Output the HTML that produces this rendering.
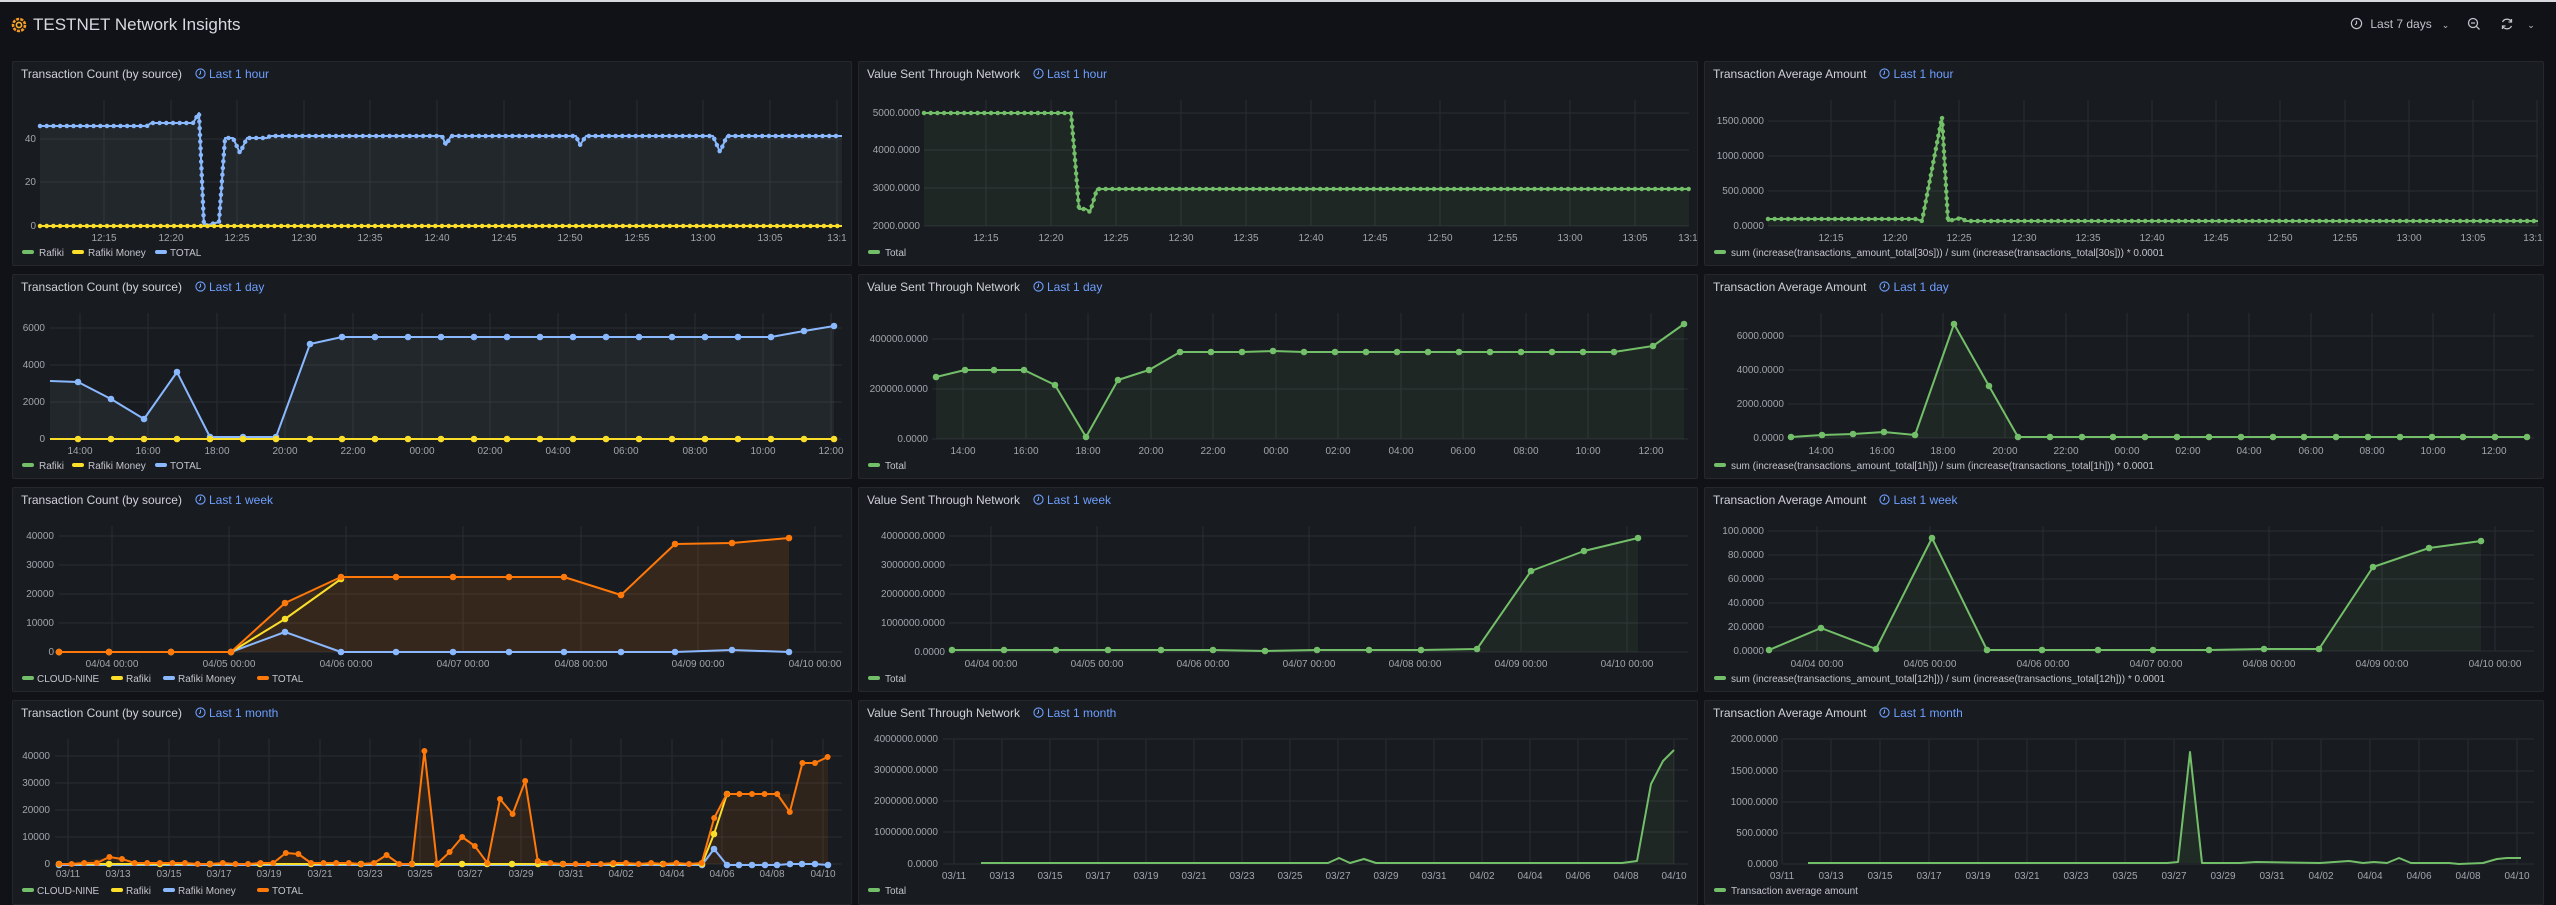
<!DOCTYPE html>
<html><head><meta charset="utf-8">
<style>
*{margin:0;padding:0;box-sizing:border-box}
body{width:2556px;height:905px;background:#111217;overflow:hidden;position:relative;font-family:"Liberation Sans",sans-serif;color:#ccccdc}
.topline{position:absolute;left:0;top:0;width:2556px;height:2px;background:#d8d9de}
.p{position:absolute;width:840px;height:205px;background:#181b1f;border:1px solid #25272d;border-radius:2px;overflow:hidden}
.p svg{position:absolute;left:-1px;top:-1px}
.t{position:absolute;left:8px;top:5px;font-size:12px;color:#d0d1da;white-space:nowrap}
.t span{color:#6e9fff;margin-left:13px}
.t span svg{position:relative;left:0;top:1px;margin-right:3px}
.gr{stroke:#2a2d33;stroke-width:1;fill:none}
.yl{fill:#a3a5ad;font:10px "Liberation Sans",sans-serif;text-anchor:end}
.xl{fill:#a3a5ad;font:10px "Liberation Sans",sans-serif;text-anchor:middle}
.lg{fill:#c4c5ce;font:10px "Liberation Sans",sans-serif}
.ln{fill:none;stroke-width:2;stroke-linejoin:round}
</style></head><body>
<div class="topline"></div>
<svg style="position:absolute;left:11px;top:17px" width="16" height="16" viewBox="0 0 16 16"><circle cx="8" cy="8" r="6" fill="none" stroke="#f59a1e" stroke-width="2.6" stroke-dasharray="3 1.2"/><circle cx="8" cy="8" r="2.6" fill="none" stroke="#f9b233" stroke-width="1.6"/></svg>
<div style="position:absolute;left:33px;top:15px;font-size:17px;color:#d8d9e0">TESTNET Network Insights</div>
<div style="position:absolute;left:2350px;top:17px;font-size:12px;color:#c0c1ca;white-space:nowrap">
<svg width="13" height="13" viewBox="0 0 14 14" style="vertical-align:-2px"><circle cx="7" cy="7" r="5.5" fill="none" stroke="#c0c1ca" stroke-width="1.3"/><path d="M7 4V7L5.5 8.5" stroke="#c0c1ca" stroke-width="1.3" fill="none"/></svg>
<span style="margin-left:4px">Last 7 days</span><span style="margin-left:10px;font-size:9px">&#8964;</span>
<svg width="14" height="14" viewBox="0 0 14 14" style="margin-left:14px;vertical-align:-3px"><circle cx="6" cy="6" r="4.5" fill="none" stroke="#c0c1ca" stroke-width="1.3"/><path d="M4 6H8M9.3 9.3L12.5 12.5" stroke="#c0c1ca" stroke-width="1.3"/></svg>
<svg width="14" height="14" viewBox="0 0 14 14" style="margin-left:16px;vertical-align:-3px"><path d="M11.5 5A5 5 0 0 0 2.5 5M2.5 9A5 5 0 0 0 11.5 9M11.5 2V5H8.5M2.5 12V9H5.5" stroke="#c0c1ca" stroke-width="1.3" fill="none"/></svg>
<span style="margin-left:10px;font-size:9px">&#8964;</span>
</div>

<svg width="0" height="0" style="position:absolute">
<defs>
<marker id="mb" markerWidth="8" markerHeight="8" refX="4" refY="4" markerUnits="userSpaceOnUse"><circle cx="4" cy="4" r="3.3" fill="#8ab8ff"/></marker>
<marker id="my" markerWidth="8" markerHeight="8" refX="4" refY="4" markerUnits="userSpaceOnUse"><circle cx="4" cy="4" r="3.3" fill="#fade2a"/></marker>
<marker id="mg" markerWidth="8" markerHeight="8" refX="4" refY="4" markerUnits="userSpaceOnUse"><circle cx="4" cy="4" r="3.3" fill="#73bf69"/></marker>
<marker id="mo" markerWidth="8" markerHeight="8" refX="4" refY="4" markerUnits="userSpaceOnUse"><circle cx="4" cy="4" r="3.3" fill="#ff780a"/></marker>
<marker id="mo2" markerWidth="8" markerHeight="8" refX="4" refY="4" markerUnits="userSpaceOnUse"><circle cx="4" cy="4" r="3" fill="#ff780a"/></marker>
</defs></svg>

<!-- ROW 1 -->
<div class="p" style="left:12px;top:61px">
<svg width="840" height="205">
<path class="gr" d="M28 78H830M28 121H830M28 165H830M92 39V165M159 39V165M225 39V165M292 39V165M358 39V165M425 39V165M492 39V165M558 39V165M625 39V165M691 39V165M758 39V165M825 39V165"/>
<text class="yl" x="24" y="81">40</text><text class="yl" x="24" y="124">20</text><text class="yl" x="24" y="168">0</text>
<g class="xl"><text x="92" y="180">12:15</text><text x="159" y="180">12:20</text><text x="225" y="180">12:25</text><text x="292" y="180">12:30</text><text x="358" y="180">12:35</text><text x="425" y="180">12:40</text><text x="492" y="180">12:45</text><text x="558" y="180">12:50</text><text x="625" y="180">12:55</text><text x="691" y="180">13:00</text><text x="758" y="180">13:05</text><text x="825" y="180">13:1</text></g>
<polygon fill="rgba(130,170,170,0.09)" points="28,65 135,65 139,62 181,62 187,52 192,165 207,161 213,77 221,77 228,92 235,77 255,77 258,75 430,75 434,84 439,75 564,75 568,84 574,75 701,75 708,91 715,75 830,75 830,165 28,165"/>
<polyline class="ln" stroke="#8ab8ff" points="28,65 135,65 139,62 181,62 187,52 192,165 207,161 213,77 221,77 228,92 235,77 255,77 258,75 430,75 434,84 439,75 564,75 568,84 574,75 701,75 708,91 715,75 830,75"/>
<polyline fill="none" stroke="#8ab8ff" stroke-width="4.5" stroke-linecap="round" stroke-dasharray="0 6.7" points="28,65 135,65 139,62 181,62 187,52 192,165 207,161 213,77 221,77 228,92 235,77 255,77 258,75 430,75 434,84 439,75 564,75 568,84 574,75 701,75 708,91 715,75 830,75"/>
<path d="M28 165H830" stroke="#fade2a" stroke-width="2"/>
<path d="M28 165H830" stroke="#fade2a" stroke-width="4.5" stroke-linecap="round" stroke-dasharray="0 6.7"/>
<rect x="10" y="189" width="12" height="4" rx="2" fill="#73bf69"/><text class="lg" x="27" y="195">Rafiki</text>
<rect x="60" y="189" width="12" height="4" rx="2" fill="#fade2a"/><text class="lg" x="76" y="195">Rafiki Money</text>
<rect x="143" y="189" width="12" height="4" rx="2" fill="#8ab8ff"/><text class="lg" x="158" y="195">TOTAL</text>
</svg>
<div class="t">Transaction Count (by source)<span><svg width="11" height="11" viewBox="0 0 12 12"><circle cx="6" cy="6" r="5" fill="none" stroke="#6e9fff" stroke-width="1.2"/><path d="M6 3V6L4.5 7.5" stroke="#6e9fff" stroke-width="1.2" fill="none"/></svg>Last 1 hour</span></div>
</div>

<div class="p" style="left:858px;top:61px">
<svg width="840" height="205">
<path class="gr" d="M66 52H831M66 89H831M66 127H831M66 165H831M128 39V165M193 39V165M258 39V165M323 39V165M388 39V165M453 39V165M517 39V165M582 39V165M647 39V165M712 39V165M777 39V165"/>
<text class="yl" x="62" y="55">5000.0000</text><text class="yl" x="62" y="92">4000.0000</text><text class="yl" x="62" y="130">3000.0000</text><text class="yl" x="62" y="168">2000.0000</text>
<g class="xl"><text x="128" y="180">12:15</text><text x="193" y="180">12:20</text><text x="258" y="180">12:25</text><text x="323" y="180">12:30</text><text x="388" y="180">12:35</text><text x="453" y="180">12:40</text><text x="517" y="180">12:45</text><text x="582" y="180">12:50</text><text x="647" y="180">12:55</text><text x="712" y="180">13:00</text><text x="777" y="180">13:05</text><text x="830" y="180">13:1</text></g>
<polygon fill="rgba(115,191,105,0.08)" points="66,52 213,52 216,86 221,148 228,148 232,151 239,128 245,128 831,128 831,165 66,165"/>
<polyline class="ln" stroke="#73bf69" points="66,52 213,52 216,86 221,148 228,148 232,151 239,128 245,128 831,128"/>
<polyline fill="none" stroke="#73bf69" stroke-width="4.5" stroke-linecap="round" stroke-dasharray="0 6.7" points="66,52 213,52 216,86 221,148 228,148 232,151 239,128 245,128 831,128"/>
<rect x="10" y="189" width="12" height="4" rx="2" fill="#73bf69"/><text class="lg" x="27" y="195">Total</text>
</svg>
<div class="t">Value Sent Through Network<span><svg width="11" height="11" viewBox="0 0 12 12"><circle cx="6" cy="6" r="5" fill="none" stroke="#6e9fff" stroke-width="1.2"/><path d="M6 3V6L4.5 7.5" stroke="#6e9fff" stroke-width="1.2" fill="none"/></svg>Last 1 hour</span></div>
</div>

<div class="p" style="left:1704px;top:61px">
<svg width="840" height="205">
<path class="gr" d="M64 60H834M64 95H834M64 130H834M64 165H834M127 39V165M191 39V165M255 39V165M320 39V165M384 39V165M448 39V165M512 39V165M576 39V165M641 39V165M705 39V165M769 39V165M833 39V165"/>
<text class="yl" x="60" y="63">1500.0000</text><text class="yl" x="60" y="98">1000.0000</text><text class="yl" x="60" y="133">500.0000</text><text class="yl" x="60" y="168">0.0000</text>
<g class="xl"><text x="127" y="180">12:15</text><text x="191" y="180">12:20</text><text x="255" y="180">12:25</text><text x="320" y="180">12:30</text><text x="384" y="180">12:35</text><text x="448" y="180">12:40</text><text x="512" y="180">12:45</text><text x="576" y="180">12:50</text><text x="641" y="180">12:55</text><text x="705" y="180">13:00</text><text x="769" y="180">13:05</text><text x="829" y="180">13:1</text></g>
<polygon fill="rgba(115,191,105,0.08)" points="64,158 212,158 218,160 238,56 244,160 257,157 262,160 834,160 834,165 64,165"/>
<polyline class="ln" stroke="#73bf69" points="64,158 212,158 218,160 238,56 244,160 257,157 262,160 834,160"/>
<polyline fill="none" stroke="#73bf69" stroke-width="4.5" stroke-linecap="round" stroke-dasharray="0 6.7" points="64,158 212,158 218,160 238,56 244,160 257,157 262,160 834,160"/>
<rect x="10" y="189" width="12" height="4" rx="2" fill="#73bf69"/><text class="lg" x="27" y="195">sum (increase(transactions_amount_total[30s])) / sum (increase(transactions_total[30s])) * 0.0001</text>
</svg>
<div class="t">Transaction Average Amount<span><svg width="11" height="11" viewBox="0 0 12 12"><circle cx="6" cy="6" r="5" fill="none" stroke="#6e9fff" stroke-width="1.2"/><path d="M6 3V6L4.5 7.5" stroke="#6e9fff" stroke-width="1.2" fill="none"/></svg>Last 1 hour</span></div>
</div>

<!-- ROW 2 -->
<div class="p" style="left:12px;top:274px">
<svg width="840" height="205">
<path class="gr" d="M38 54H830M38 91H830M38 128H830M38 165H830M68 39V165M136 39V165M205 39V165M273 39V165M341 39V165M410 39V165M478 39V165M546 39V165M614 39V165M683 39V165M751 39V165M819 39V165"/>
<text class="yl" x="33" y="57">6000</text><text class="yl" x="33" y="94">4000</text><text class="yl" x="33" y="131">2000</text><text class="yl" x="33" y="168">0</text>
<g class="xl"><text x="68" y="180">14:00</text><text x="136" y="180">16:00</text><text x="205" y="180">18:00</text><text x="273" y="180">20:00</text><text x="341" y="180">22:00</text><text x="410" y="180">00:00</text><text x="478" y="180">02:00</text><text x="546" y="180">04:00</text><text x="614" y="180">06:00</text><text x="683" y="180">08:00</text><text x="751" y="180">10:00</text><text x="819" y="180">12:00</text></g>
<polygon fill="rgba(130,170,170,0.09)" points="38,107 66,108 99,125 132,145 165,98 198,163 231,163 264,163 298,70 330,63 759,63 792,57 822,52 822,165 38,165"/>
<polyline class="ln" stroke="#8ab8ff" marker-mid="url(#mb)" marker-end="url(#mb)" points="38,107 66,108 99,125 132,145 165,98 198,163 231,163 264,163 298,70 330,63 363,63 396,63 429,63 462,63 495,63 528,63 561,63 594,63 627,63 660,63 693,63 726,63 759,63 792,57 822,52"/>
<polyline class="ln" stroke="#fade2a" marker-mid="url(#my)" marker-end="url(#my)" points="38,165 66,165 99,165 132,165 165,165 198,165 231,165 264,165 298,165 330,165 363,165 396,165 429,165 462,165 495,165 528,165 561,165 594,165 627,165 660,165 693,165 726,165 759,165 792,165 822,165"/>
<rect x="10" y="189" width="12" height="4" rx="2" fill="#73bf69"/><text class="lg" x="27" y="195">Rafiki</text>
<rect x="60" y="189" width="12" height="4" rx="2" fill="#fade2a"/><text class="lg" x="76" y="195">Rafiki Money</text>
<rect x="143" y="189" width="12" height="4" rx="2" fill="#8ab8ff"/><text class="lg" x="158" y="195">TOTAL</text>
</svg>
<div class="t">Transaction Count (by source)<span><svg width="11" height="11" viewBox="0 0 12 12"><circle cx="6" cy="6" r="5" fill="none" stroke="#6e9fff" stroke-width="1.2"/><path d="M6 3V6L4.5 7.5" stroke="#6e9fff" stroke-width="1.2" fill="none"/></svg>Last 1 day</span></div>
</div>

<div class="p" style="left:858px;top:274px">
<svg width="840" height="205">
<path class="gr" d="M74 65H830M74 115H830M74 165H830M105 39V165M168 39V165M230 39V165M293 39V165M355 39V165M418 39V165M480 39V165M543 39V165M605 39V165M668 39V165M730 39V165M793 39V165"/>
<text class="yl" x="70" y="68">400000.0000</text><text class="yl" x="70" y="118">200000.0000</text><text class="yl" x="70" y="168">0.0000</text>
<g class="xl"><text x="105" y="180">14:00</text><text x="168" y="180">16:00</text><text x="230" y="180">18:00</text><text x="293" y="180">20:00</text><text x="355" y="180">22:00</text><text x="418" y="180">00:00</text><text x="480" y="180">02:00</text><text x="543" y="180">04:00</text><text x="605" y="180">06:00</text><text x="668" y="180">08:00</text><text x="730" y="180">10:00</text><text x="793" y="180">12:00</text></g>
<polygon fill="rgba(115,191,105,0.08)" points="78,103 107,96 136,96 166,96 197,111 228,163 260,106 291,96 322,78 756,78 795,72 826,50 826,165 78,165"/>
<polyline class="ln" stroke="#73bf69" marker-start="url(#mg)" marker-mid="url(#mg)" marker-end="url(#mg)" points="78,103 107,96 136,96 166,96 197,111 228,163 260,106 291,96 322,78 353,78 384,78 415,77 446,78 477,78 508,78 539,78 570,78 601,78 632,78 663,78 694,78 725,78 756,78 795,72 826,50"/>
<rect x="10" y="189" width="12" height="4" rx="2" fill="#73bf69"/><text class="lg" x="27" y="195">Total</text>
</svg>
<div class="t">Value Sent Through Network<span><svg width="11" height="11" viewBox="0 0 12 12"><circle cx="6" cy="6" r="5" fill="none" stroke="#6e9fff" stroke-width="1.2"/><path d="M6 3V6L4.5 7.5" stroke="#6e9fff" stroke-width="1.2" fill="none"/></svg>Last 1 day</span></div>
</div>

<div class="p" style="left:1704px;top:274px">
<svg width="840" height="205">
<path class="gr" d="M84 62H830M84 96H830M84 130H830M84 164H830M117 39V164M178 39V164M239 39V164M301 39V164M362 39V164M423 39V164M484 39V164M545 39V164M607 39V164M668 39V164M729 39V164M790 39V164"/>
<text class="yl" x="80" y="65">6000.0000</text><text class="yl" x="80" y="99">4000.0000</text><text class="yl" x="80" y="133">2000.0000</text><text class="yl" x="80" y="167">0.0000</text>
<g class="xl"><text x="117" y="180">14:00</text><text x="178" y="180">16:00</text><text x="239" y="180">18:00</text><text x="301" y="180">20:00</text><text x="362" y="180">22:00</text><text x="423" y="180">00:00</text><text x="484" y="180">02:00</text><text x="545" y="180">04:00</text><text x="607" y="180">06:00</text><text x="668" y="180">08:00</text><text x="729" y="180">10:00</text><text x="790" y="180">12:00</text></g>
<polygon fill="rgba(115,191,105,0.08)" points="87,163 118,161 149,160 180,158 211,161 250,50 285,112 314,163 823,163 823,164 87,164"/>
<polyline class="ln" stroke="#73bf69" marker-start="url(#mg)" marker-mid="url(#mg)" marker-end="url(#mg)" points="87,163 118,161 149,160 180,158 211,161 250,50 285,112 314,163 346,163 378,163 409,163 441,163 473,163 505,163 537,163 569,163 600,163 632,163 664,163 696,163 728,163 759,163 791,163 823,163"/>
<rect x="10" y="189" width="12" height="4" rx="2" fill="#73bf69"/><text class="lg" x="27" y="195">sum (increase(transactions_amount_total[1h])) / sum (increase(transactions_total[1h])) * 0.0001</text>
</svg>
<div class="t">Transaction Average Amount<span><svg width="11" height="11" viewBox="0 0 12 12"><circle cx="6" cy="6" r="5" fill="none" stroke="#6e9fff" stroke-width="1.2"/><path d="M6 3V6L4.5 7.5" stroke="#6e9fff" stroke-width="1.2" fill="none"/></svg>Last 1 day</span></div>
</div>

<!-- ROW 3 -->
<div class="p" style="left:12px;top:487px">
<svg width="840" height="205">
<path class="gr" d="M47 49H830M47 78H830M47 107H830M47 136H830M47 165H830M100 39V165M217 39V165M334 39V165M451 39V165M569 39V165M686 39V165M803 39V165"/>
<text class="yl" x="42" y="52">40000</text><text class="yl" x="42" y="81">30000</text><text class="yl" x="42" y="110">20000</text><text class="yl" x="42" y="139">10000</text><text class="yl" x="42" y="168">0</text>
<g class="xl"><text x="100" y="180">04/04 00:00</text><text x="217" y="180">04/05 00:00</text><text x="334" y="180">04/06 00:00</text><text x="451" y="180">04/07 00:00</text><text x="569" y="180">04/08 00:00</text><text x="686" y="180">04/09 00:00</text><text x="803" y="180">04/10 00:00</text></g>
<polygon fill="rgba(255,120,10,0.13)" points="219,165 273,116 329,90 552,90 609,108 663,57 720,56 777,51 777,165"/>
<polyline class="ln" stroke="#8ab8ff" marker-start="url(#mb)" marker-mid="url(#mb)" marker-end="url(#mb)" points="47,165 97,165 159,165 219,165 273,145 329,165 384,165 441,165 497,165 552,165 609,165 663,165 720,163 777,165"/>
<polyline class="ln" stroke="#fade2a" marker-start="url(#my)" marker-mid="url(#my)" marker-end="url(#my)" points="47,165 97,165 159,165 219,165 273,132 329,92"/>
<polyline class="ln" stroke="#ff780a" marker-start="url(#mo)" marker-mid="url(#mo)" marker-end="url(#mo)" points="47,165 97,165 159,165 219,165 273,116 329,90 384,90 441,90 497,90 552,90 609,108 663,57 720,56 777,51"/>
<rect x="10" y="189" width="12" height="4" rx="2" fill="#73bf69"/><text class="lg" x="25" y="195">CLOUD-NINE</text>
<rect x="99" y="189" width="12" height="4" rx="2" fill="#fade2a"/><text class="lg" x="114" y="195">Rafiki</text>
<rect x="151" y="189" width="12" height="4" rx="2" fill="#8ab8ff"/><text class="lg" x="166" y="195">Rafiki Money</text>
<rect x="245" y="189" width="12" height="4" rx="2" fill="#ff780a"/><text class="lg" x="260" y="195">TOTAL</text>
</svg>
<div class="t">Transaction Count (by source)<span><svg width="11" height="11" viewBox="0 0 12 12"><circle cx="6" cy="6" r="5" fill="none" stroke="#6e9fff" stroke-width="1.2"/><path d="M6 3V6L4.5 7.5" stroke="#6e9fff" stroke-width="1.2" fill="none"/></svg>Last 1 week</span></div>
</div>

<div class="p" style="left:858px;top:487px">
<svg width="840" height="205">
<path class="gr" d="M91 49H830M91 78H830M91 107H830M91 136H830M91 165H830M133 39V165M239 39V165M345 39V165M451 39V165M557 39V165M663 39V165M769 39V165"/>
<text class="yl" x="87" y="52">4000000.0000</text><text class="yl" x="87" y="81">3000000.0000</text><text class="yl" x="87" y="110">2000000.0000</text><text class="yl" x="87" y="139">1000000.0000</text><text class="yl" x="87" y="168">0.0000</text>
<g class="xl"><text x="133" y="180">04/04 00:00</text><text x="239" y="180">04/05 00:00</text><text x="345" y="180">04/06 00:00</text><text x="451" y="180">04/07 00:00</text><text x="557" y="180">04/08 00:00</text><text x="663" y="180">04/09 00:00</text><text x="769" y="180">04/10 00:00</text></g>
<polygon fill="rgba(115,191,105,0.08)" points="94,163 619,162 673,84 726,64 780,51 780,165 94,165"/>
<polyline class="ln" stroke="#73bf69" marker-start="url(#mg)" marker-mid="url(#mg)" marker-end="url(#mg)" points="94,163 146,163 198,163 250,163 303,163 355,163 407,164 459,163 511,163 563,163 619,162 673,84 726,64 780,51"/>
<rect x="10" y="189" width="12" height="4" rx="2" fill="#73bf69"/><text class="lg" x="27" y="195">Total</text>
</svg>
<div class="t">Value Sent Through Network<span><svg width="11" height="11" viewBox="0 0 12 12"><circle cx="6" cy="6" r="5" fill="none" stroke="#6e9fff" stroke-width="1.2"/><path d="M6 3V6L4.5 7.5" stroke="#6e9fff" stroke-width="1.2" fill="none"/></svg>Last 1 week</span></div>
</div>

<div class="p" style="left:1704px;top:487px">
<svg width="840" height="205">
<path class="gr" d="M64 44H830M64 68H830M64 92H830M64 116H830M64 140H830M64 164H830M113 39V164M226 39V164M339 39V164M452 39V164M565 39V164M678 39V164M791 39V164"/>
<text class="yl" x="60" y="47">100.0000</text><text class="yl" x="60" y="71">80.0000</text><text class="yl" x="60" y="95">60.0000</text><text class="yl" x="60" y="119">40.0000</text><text class="yl" x="60" y="143">20.0000</text><text class="yl" x="60" y="167">0.0000</text>
<g class="xl"><text x="113" y="180">04/04 00:00</text><text x="226" y="180">04/05 00:00</text><text x="339" y="180">04/06 00:00</text><text x="452" y="180">04/07 00:00</text><text x="565" y="180">04/08 00:00</text><text x="678" y="180">04/09 00:00</text><text x="791" y="180">04/10 00:00</text></g>
<polygon fill="rgba(115,191,105,0.08)" points="65,163 117,141 172,162 228,51 283,163 615,162 669,80 725,61 777,54 777,164 65,164"/>
<polyline class="ln" stroke="#73bf69" marker-start="url(#mg)" marker-mid="url(#mg)" marker-end="url(#mg)" points="65,163 117,141 172,162 228,51 283,163 338,163 394,163 449,163 505,163 560,162 615,162 669,80 725,61 777,54"/>
<rect x="10" y="189" width="12" height="4" rx="2" fill="#73bf69"/><text class="lg" x="27" y="195">sum (increase(transactions_amount_total[12h])) / sum (increase(transactions_total[12h])) * 0.0001</text>
</svg>
<div class="t">Transaction Average Amount<span><svg width="11" height="11" viewBox="0 0 12 12"><circle cx="6" cy="6" r="5" fill="none" stroke="#6e9fff" stroke-width="1.2"/><path d="M6 3V6L4.5 7.5" stroke="#6e9fff" stroke-width="1.2" fill="none"/></svg>Last 1 week</span></div>
</div>

<!-- ROW 4 -->
<div class="p" style="left:12px;top:700px">
<svg width="840" height="205">
<path class="gr" d="M43 56H830M43 83H830M43 110H830M43 137H830M43 164H830M56 39V164M106 39V164M157 39V164M207 39V164M257 39V164M308 39V164M358 39V164M408 39V164M458 39V164M509 39V164M559 39V164M609 39V164M660 39V164M710 39V164M760 39V164M811 39V164"/>
<text class="yl" x="38" y="59">40000</text><text class="yl" x="38" y="86">30000</text><text class="yl" x="38" y="113">20000</text><text class="yl" x="38" y="140">10000</text><text class="yl" x="38" y="167">0</text>
<g class="xl"><text x="56" y="177">03/11</text><text x="106" y="177">03/13</text><text x="157" y="177">03/15</text><text x="207" y="177">03/17</text><text x="257" y="177">03/19</text><text x="308" y="177">03/21</text><text x="358" y="177">03/23</text><text x="408" y="177">03/25</text><text x="458" y="177">03/27</text><text x="509" y="177">03/29</text><text x="559" y="177">03/31</text><text x="609" y="177">04/02</text><text x="660" y="177">04/04</text><text x="710" y="177">04/06</text><text x="760" y="177">04/08</text><text x="811" y="177">04/10</text></g>
<polygon fill="rgba(255,120,10,0.1)" points="47,164 97,157 110,159 122,163 261,163 274,153 286,154 299,163 362,163 375,155 387,164 400,164 412,51 425,164 438,152 450,137 463,146 475,163 488,99 501,114 513,81 526,161 539,163 690,164 702,118 715,94 778,94 778,112 790,63 803,63 816,57 816,164"/>
<polyline class="ln" stroke="#8ab8ff" marker-start="url(#mb)" marker-mid="url(#mb)" marker-end="url(#mb)" points="47,165 690,165 702,149 715,165 727,165 740,165 753,165 765,165 778,164 790,164 803,164 816,165"/>
<polyline class="ln" stroke="#fade2a" marker-start="url(#my)" marker-mid="url(#my)" marker-end="url(#my)" points="47,164 97,164 148,164 198,164 248,164 299,164 349,164 400,164 425,164 450,164 475,164 500,164 526,164 551,164 601,164 651,164 690,164 702,134 715,94"/>
<polyline class="ln" stroke="#ff780a" marker-start="url(#mo2)" marker-mid="url(#mo2)" marker-end="url(#mo2)" points="47,164 59.6,164 72.2,163 84.8,163 97.4,157 110,159 122.6,163 135.2,163 147.8,163 160.4,163 173,163 185.6,164 198.2,164 210.8,163 223.4,164 236,164 248.6,163 261.2,163 273.8,153 286.4,154 299,163 311.6,163 324.2,163 336.8,163 349.4,164 362,163 374.6,155 387.2,164 399.8,164 412.4,51 425,164 437.6,152 450.2,137 462.8,146 475.4,163 488,99 500.6,114 513.2,81 525.8,161 538.4,163 551,164 563.6,164 576.2,164 588.8,164 601.4,163 614,163 626.6,164 639.2,163 651.8,164 664.4,163 677,164 689.6,163 702.2,118 714.8,94 727.4,94 740,94 752.6,94 765.2,94 777.8,112 790.4,63 803,63 815.6,57"/>
<rect x="10" y="188" width="12" height="4" rx="2" fill="#73bf69"/><text class="lg" x="25" y="194">CLOUD-NINE</text>
<rect x="99" y="188" width="12" height="4" rx="2" fill="#fade2a"/><text class="lg" x="114" y="194">Rafiki</text>
<rect x="151" y="188" width="12" height="4" rx="2" fill="#8ab8ff"/><text class="lg" x="166" y="194">Rafiki Money</text>
<rect x="245" y="188" width="12" height="4" rx="2" fill="#ff780a"/><text class="lg" x="260" y="194">TOTAL</text>
</svg>
<div class="t">Transaction Count (by source)<span><svg width="11" height="11" viewBox="0 0 12 12"><circle cx="6" cy="6" r="5" fill="none" stroke="#6e9fff" stroke-width="1.2"/><path d="M6 3V6L4.5 7.5" stroke="#6e9fff" stroke-width="1.2" fill="none"/></svg>Last 1 month</span></div>
</div>

<div class="p" style="left:858px;top:700px">
<svg width="840" height="205">
<path class="gr" d="M85 39H830M85 70H830M85 101H830M85 132H830M85 164H830M96 39V164M144 39V164M192 39V164M240 39V164M288 39V164M336 39V164M384 39V164M432 39V164M480 39V164M528 39V164M576 39V164M624 39V164M672 39V164M720 39V164M768 39V164M816 39V164"/>
<text class="yl" x="80" y="42">4000000.0000</text><text class="yl" x="80" y="73">3000000.0000</text><text class="yl" x="80" y="104">2000000.0000</text><text class="yl" x="80" y="135">1000000.0000</text><text class="yl" x="80" y="167">0.0000</text>
<g class="xl"><text x="96" y="179">03/11</text><text x="144" y="179">03/13</text><text x="192" y="179">03/15</text><text x="240" y="179">03/17</text><text x="288" y="179">03/19</text><text x="336" y="179">03/21</text><text x="384" y="179">03/23</text><text x="432" y="179">03/25</text><text x="480" y="179">03/27</text><text x="528" y="179">03/29</text><text x="576" y="179">03/31</text><text x="624" y="179">04/02</text><text x="672" y="179">04/04</text><text x="720" y="179">04/06</text><text x="768" y="179">04/08</text><text x="816" y="179">04/10</text></g>
<polygon fill="rgba(115,191,105,0.08)" points="764,163 779,161 793,84 805,61 816,50 816,164 764,164"/>
<polyline class="ln" stroke="#73bf69" points="123,163 470,163 481,158 492,163 506,159 518,163 764,163 779,161 793,84 805,61 816,50"/>
<rect x="10" y="188" width="12" height="4" rx="2" fill="#73bf69"/><text class="lg" x="27" y="194">Total</text>
</svg>
<div class="t">Value Sent Through Network<span><svg width="11" height="11" viewBox="0 0 12 12"><circle cx="6" cy="6" r="5" fill="none" stroke="#6e9fff" stroke-width="1.2"/><path d="M6 3V6L4.5 7.5" stroke="#6e9fff" stroke-width="1.2" fill="none"/></svg>Last 1 month</span></div>
</div>

<div class="p" style="left:1704px;top:700px">
<svg width="840" height="205">
<path class="gr" d="M79 39H830M79 71H830M79 102H830M79 133H830M79 164H830M78 39V164M127 39V164M176 39V164M225 39V164M274 39V164M323 39V164M372 39V164M421 39V164M470 39V164M519 39V164M568 39V164M617 39V164M666 39V164M715 39V164M764 39V164M813 39V164"/>
<text class="yl" x="74" y="42">2000.0000</text><text class="yl" x="74" y="74">1500.0000</text><text class="yl" x="74" y="105">1000.0000</text><text class="yl" x="74" y="136">500.0000</text><text class="yl" x="74" y="167">0.0000</text>
<g class="xl"><text x="78" y="179">03/11</text><text x="127" y="179">03/13</text><text x="176" y="179">03/15</text><text x="225" y="179">03/17</text><text x="274" y="179">03/19</text><text x="323" y="179">03/21</text><text x="372" y="179">03/23</text><text x="421" y="179">03/25</text><text x="470" y="179">03/27</text><text x="519" y="179">03/29</text><text x="568" y="179">03/31</text><text x="617" y="179">04/02</text><text x="666" y="179">04/04</text><text x="715" y="179">04/06</text><text x="764" y="179">04/08</text><text x="813" y="179">04/10</text></g>
<polygon fill="rgba(115,191,105,0.1)" points="463,163 474,162 486,52 498,163"/>
<polyline class="ln" stroke="#73bf69" points="104,163 463,163 474,162 486,52 498,163 536,163 552,162 616,163 645,161 659,163 670,162 683,163 695,158 707,163 745,163 755,164 779,163 793,159 803,158 817,158"/>
<rect x="10" y="188" width="12" height="4" rx="2" fill="#73bf69"/><text class="lg" x="27" y="194">Transaction average amount</text>
</svg>
<div class="t">Transaction Average Amount<span><svg width="11" height="11" viewBox="0 0 12 12"><circle cx="6" cy="6" r="5" fill="none" stroke="#6e9fff" stroke-width="1.2"/><path d="M6 3V6L4.5 7.5" stroke="#6e9fff" stroke-width="1.2" fill="none"/></svg>Last 1 month</span></div>
</div>
</body></html>
